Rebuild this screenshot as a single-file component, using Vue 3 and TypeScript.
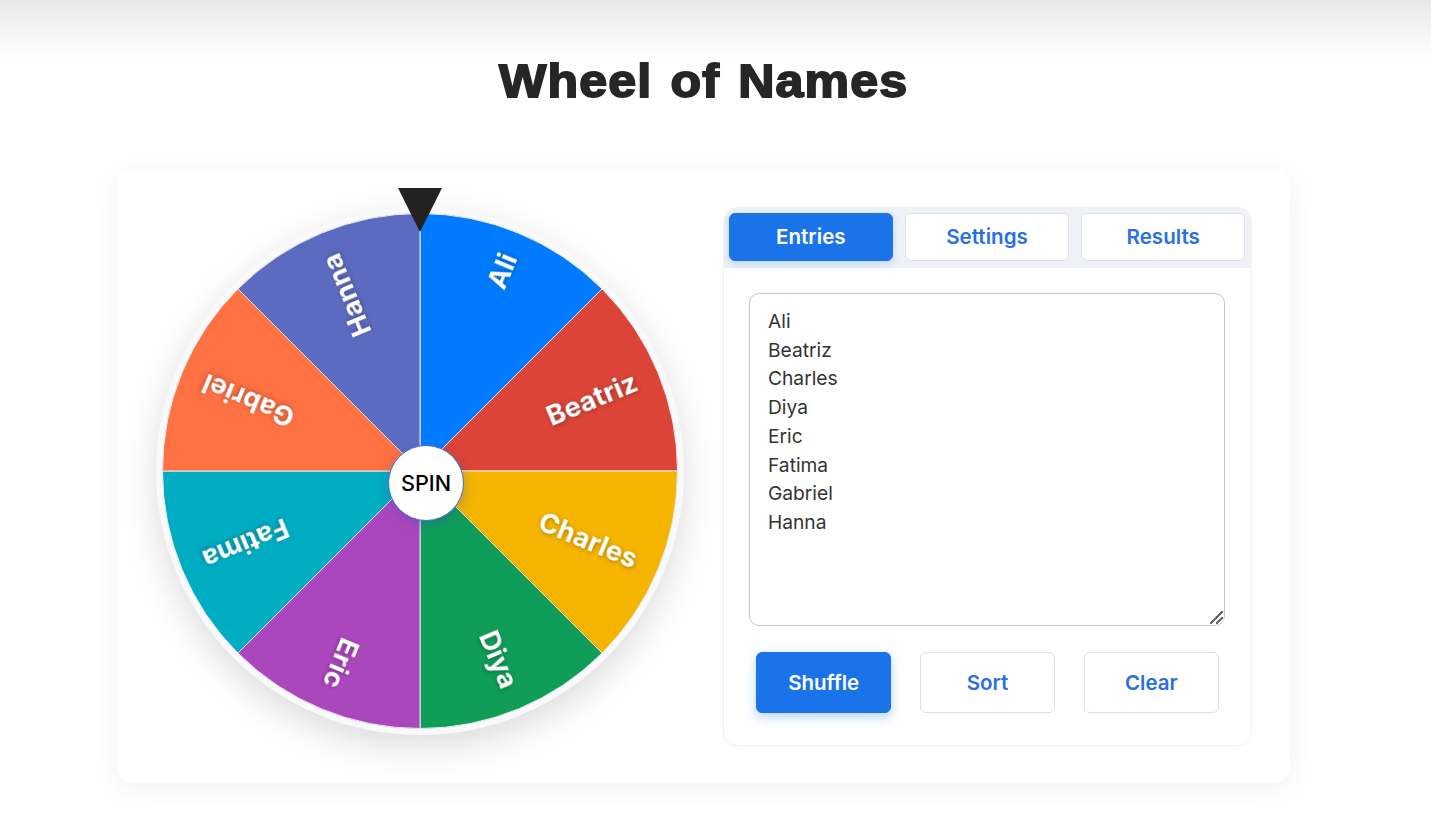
<script setup lang="ts">
import { computed, ref } from 'vue'

const names = ['Ali', 'Beatriz', 'Charles', 'Diya', 'Eric', 'Fatima', 'Gabriel', 'Hanna']
const colors = ['#007bff', '#db4437', '#f4b400', '#0f9d58', '#ab47bc', '#00acc1', '#ff7043', '#5c6bc0']
const tabs = ['Entries', 'Settings', 'Results']

const activeTab = ref('Entries')
const entries = ref(names.join('\n'))

const RADIUS = 257.5
const CENTER = 258

const polar = (deg: number, r: number) => {
  const a = ((deg - 90) * Math.PI) / 180
  return `${CENTER + r * Math.cos(a)} ${CENTER + r * Math.sin(a)}`
}

const slices = computed(() => {
  const step = 360 / names.length
  return names.map((name, i) => {
    const start = i * step
    const end = start + step
    return {
      name,
      color: colors[i],
      d: `M ${CENTER} ${CENTER} L ${polar(start, RADIUS)} A ${RADIUS} ${RADIUS} 0 0 1 ${polar(end, RADIUS)} Z`,
      transform: `rotate(${start + step / 2 - 90} ${CENTER} ${CENTER})`
    }
  })
})
</script>

<template>
  <div class="page">
    <header class="page-header">
      <h1 class="title">Wheel of Names</h1>
    </header>

    <main class="card">
      <div class="wheel-wrap">
        <svg class="wheel" viewBox="0 0 516 516" width="516" height="516">
          <g v-for="s in slices" :key="s.name">
            <path :d="s.d" :fill="s.color" stroke="#e9e9ee" stroke-width="1" />
            <text
              :transform="s.transform"
              :x="CENTER + 234"
              :y="CENTER + 9"
              class="slice-label"
              text-anchor="end"
            >{{ s.name }}</text>
          </g>
        </svg>
        <div class="pointer"></div>
        <button class="spin">SPIN</button>
      </div>

      <section class="panel">
        <div class="tabs">
          <button
            v-for="tab in tabs"
            :key="tab"
            class="tab"
            :class="{ active: tab === activeTab }"
            @click="activeTab = tab"
          >{{ tab }}</button>
        </div>
        <div class="panel-body">
          <textarea v-model="entries" class="entries" spellcheck="false"></textarea>
          <div class="actions">
            <button class="btn primary">Shuffle</button>
            <button class="btn">Sort</button>
            <button class="btn">Clear</button>
          </div>
        </div>
      </section>
    </main>
  </div>
</template>

<style>
html,
body {
  margin: 0;
  background: #fff;
}
</style>

<style scoped>
.page {
  height: 826px;
  box-sizing: border-box;
  padding-right: 24px;
  overflow: hidden;
  font-family: Inter, "Noto Sans", sans-serif;
  background: linear-gradient(180deg, #e6e4ee 0, #e9e9e9 3px, #f8f8f8 38px, #fff 60px);
}

.page-header {
  height: 169px;
  box-sizing: border-box;
  padding-top: 51px;
  text-align: center;
}

.title {
  display: inline-block;
  margin: 0;
  font-family: "Liberation Sans", Arial, sans-serif;
  font-size: 46px;
  line-height: 60px;
  font-weight: 700;
  letter-spacing: 1px;
  word-spacing: 3px;
  color: #262626;
  -webkit-text-stroke: 1.8px #262626;
  transform: scaleX(1.09);
}

.card {
  width: 1173px;
  height: 614px;
  margin: 0 auto;
  box-sizing: border-box;
  padding: 38px 38px 37px 39px;
  display: flex;
  gap: 39px;
  background: #fff;
  border-radius: 16px;
  box-shadow: 0 6px 28px rgba(0, 0, 0, 0.06);
}

/* wheel */
.wheel-wrap {
  position: relative;
  flex: none;
  width: 528px;
  height: 528px;
  box-sizing: border-box;
  padding: 6px;
  border-radius: 50%;
  background: #f8f9fa;
  box-shadow: 0 12px 36px rgba(0, 0, 0, 0.14);
}

.wheel {
  display: block;
}

.slice-label {
  font-family: Inter, "Noto Sans", sans-serif;
  font-size: 27.5px;
  font-weight: 700;
  fill: #fff;
  filter: drop-shadow(1px 1px 2px rgba(0, 0, 0, 0.3));
}

.pointer {
  position: absolute;
  top: -19px;
  left: 242px;
  width: 0;
  height: 0;
  border-left: 22px solid transparent;
  border-right: 22px solid transparent;
  border-top: 44px solid #222;
}

.spin {
  position: absolute;
  top: 238px;
  left: 232px;
  width: 76px;
  height: 76px;
  padding: 0;
  box-sizing: border-box;
  border: 1.5px solid #3f6fd1;
  border-radius: 50%;
  background: #fff;
  color: #000;
  font-family: Inter, "Noto Sans", sans-serif;
  font-size: 21.6px;
  font-weight: 500;
  box-shadow: 0 4px 12px rgba(63, 81, 181, 0.35);
}

/* right panel */
.panel {
  flex: 1;
  box-sizing: border-box;
  border: 1px solid #f0f2f5;
  border-radius: 14px;
  overflow: hidden;
  background: #fff;
  box-shadow: 0 2px 10px rgba(0, 0, 0, 0.015);
}

.tabs {
  display: flex;
  gap: 12.5px;
  padding: 5px 6px 7px 5px;
  background: #eef2f7;
}

.tab {
  flex: 1;
  height: 48px;
  box-sizing: border-box;
  padding-bottom: 2px;
  border: 1px solid #dde3ee;
  border-radius: 6px;
  background: #fff;
  color: #2a6fe3;
  font-family: Inter, "Noto Sans", sans-serif;
  font-size: 20.6px;
  font-weight: 600;
}

.tab.active {
  border-color: #1a73e8;
  background: #1a73e8;
  color: #fff;
  box-shadow: 0 3px 10px rgba(26, 115, 232, 0.22);
}

.panel-body {
  padding: 25px 26px 32px 25px;
}

.entries {
  display: block;
  width: 100%;
  height: 333px;
  box-sizing: border-box;
  padding: 13px 18px;
  border: 1px solid #c4c6ca;
  border-radius: 10px;
  outline: none;
  color: #333;
  background: #fff;
  font-family: Inter, "Noto Sans", sans-serif;
  font-size: 19.2px;
  line-height: 28.7px;
}

.entries::-webkit-resizer {
  background:
    linear-gradient(135deg, transparent 45%, #666 45%, #666 55%, transparent 55%) 1px 1px / 13px 13px no-repeat,
    linear-gradient(135deg, transparent 42%, #666 42%, #666 58%, transparent 58%) 7px 7px / 7px 7px no-repeat;
}

.actions {
  display: flex;
  gap: 28.5px;
  margin-top: 26px;
  padding: 0 6px 0 7px;
}

.btn {
  flex: 1;
  height: 61px;
  box-sizing: border-box;
  border: 1px solid #dcdfe4;
  border-radius: 6px;
  background: #fff;
  color: #2a6fe3;
  font-family: Inter, "Noto Sans", sans-serif;
  font-size: 20.5px;
  font-weight: 600;
  padding-bottom: 2px;
}

.btn.primary {
  border-color: #1a73e8;
  background: #1a73e8;
  color: #fff;
  box-shadow: 0 4px 12px rgba(26, 115, 232, 0.32);
}
</style>
